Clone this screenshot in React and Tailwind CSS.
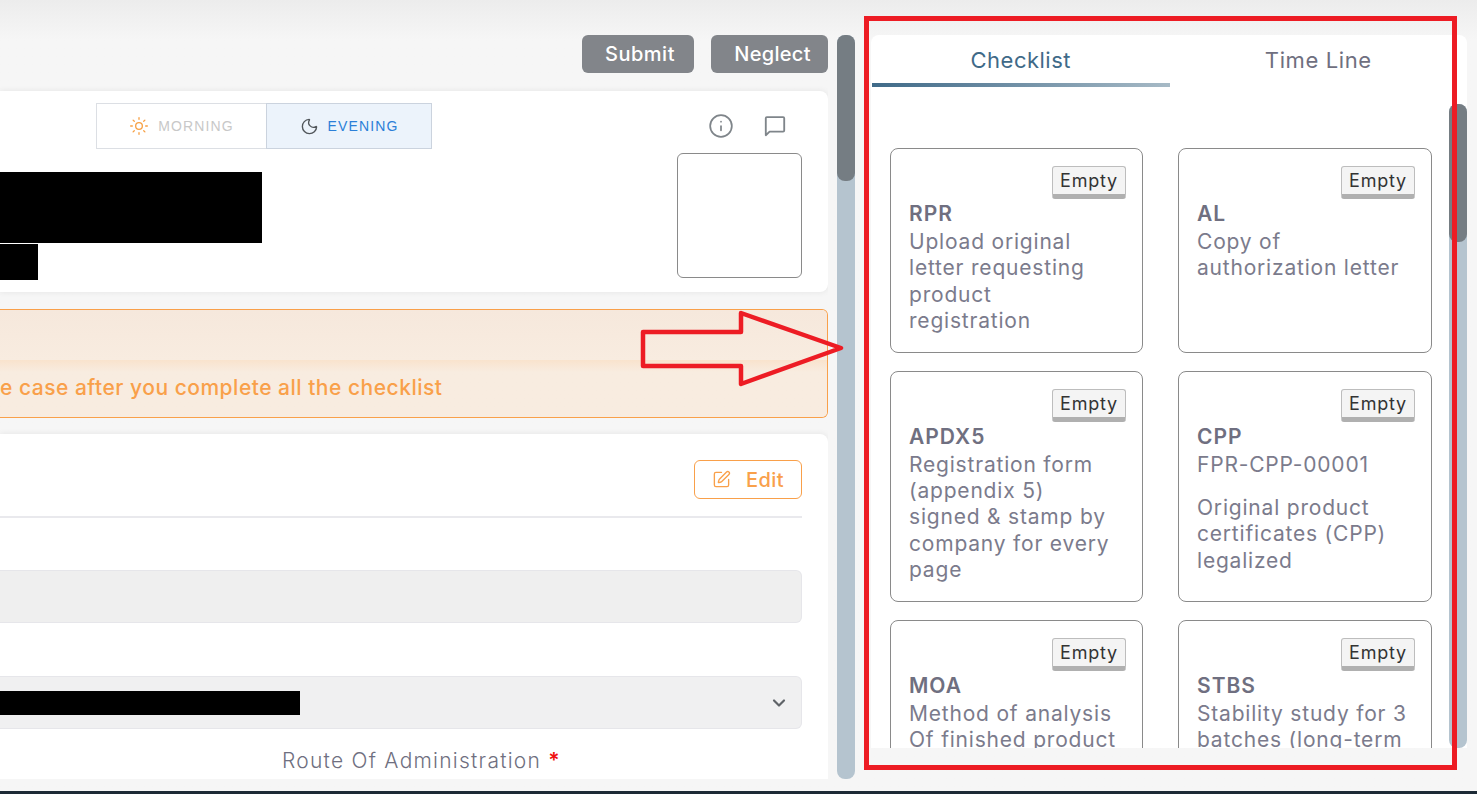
import { ChevronDown, Info, Moon, SquarePen, Sun } from "lucide-react";

const FONT = "font-['Inter','Noto_Sans',sans-serif]";

const checklist = [
  { code: "RPR", lines: ["Upload original", "letter requesting", "product", "registration"] },
  { code: "AL", lines: ["Copy of", "authorization letter"] },
  { code: "APDX5", lines: ["Registration form", "(appendix 5)", "signed & stamp by", "company for every", "page"] },
  { code: "CPP", lines: ["FPR-CPP-00001", "", "Original product", "certificates (CPP)", "legalized"] },
  { code: "MOA", lines: ["Method of analysis", "Of finished product"] },
  { code: "STBS", lines: ["Stability study for 3", "batches (long-term"] },
];

function ChatIcon() {
  return (
    <svg width="26" height="26" viewBox="0 0 24 24" fill="none" stroke="#7f858a" strokeWidth="1.7" strokeLinejoin="round">
      <path d="M3.5 4.8a1 1 0 0 1 1-1h15a1 1 0 0 1 1 1v11.4a1 1 0 0 1-1 1H7l-3.5 3.3z" />
    </svg>
  );
}

function ChecklistCard({ item }) {
  return (
    <div className="rounded-lg border border-[#8a8a8a] pl-[18px] pr-4 pt-[17px] pb-[18px]">
      <div className="flex justify-end">
        <span className="flex h-[33px] w-[74px] items-center justify-center rounded-[3px] border border-[#bdbdbd] border-b-[5px] border-b-[#b0b0b0] bg-[#f4f4f4] text-[18px] tracking-[0.8px] text-[#333]">
          Empty
        </span>
      </div>
      <div className="mt-[2px] text-[21px] font-semibold leading-[26px] tracking-[1px] text-[#6f6f80]">{item.code}</div>
      <div className="mt-[2px]">
        {item.lines.map((line, i) =>
          line ? (
            <div key={i} className="whitespace-nowrap text-[21px] leading-[26.3px] tracking-[0.8px] text-[#7b7b8c]">
              {line}
            </div>
          ) : (
            <div key={i} className="h-[17px]" />
          )
        )}
      </div>
    </div>
  );
}

function Scrollbar({ thumb, className }) {
  return (
    <div className={`w-[18px] shrink-0 rounded-b-lg bg-[#b5c4cf] ${className}`}>
      <div className={`rounded-lg bg-[#757d83] ${thumb}`} />
    </div>
  );
}

export default function App() {
  return (
    <div className={`relative flex h-[794px] flex-col overflow-hidden bg-[#f5f5f5] ${FONT}`}>
      <div className="flex min-h-0 flex-1 bg-gradient-to-b from-[#ececec] to-[#f6f6f6] to-[40px] pt-[35px]">
        {/* main form */}
        <div className="flex h-[744px] w-[828px] shrink-0 flex-col overflow-hidden">
          <div className="flex justify-end gap-[17px]">
            <button className="h-[38px] w-[112px] rounded-md bg-[#82858a] pl-1 text-[20px] font-medium tracking-[0.5px] text-white">Submit</button>
            <button className="h-[38px] w-[117px] rounded-md bg-[#82858a] pl-1.5 text-[20px] font-medium tracking-[0.3px] text-white">Neglect</button>
          </div>

          <div className="mt-[18px] flex h-[201px] shrink-0 justify-between rounded-r-lg bg-white pr-[26px] pt-3 shadow-[0_0_6px_rgba(0,0,0,0.08)]">
            <div>
              <div className="ml-[96px] flex h-[46px] w-[336px] font-['Liberation_Sans',sans-serif] text-[14px] tracking-[0.08em]">
                <div className="flex w-[170px] items-center justify-center gap-[9px] border border-r-0 border-[#dcdfe4] text-[#c8c8c8]">
                  <Sun size={20} strokeWidth={1.6} className="text-[#f7a044]" />
                  MORNING
                </div>
                <div className="flex w-[166px] items-center justify-center gap-[9px] border border-[#cbd3de] bg-[#ecf3fb] text-[#2b7fd8]">
                  <Moon size={19} strokeWidth={1.7} className="text-[#50555a]" />
                  EVENING
                </div>
              </div>
              <div className="mt-[23px] h-[71px] w-[262px] bg-black" />
              <div className="mt-px h-[36px] w-[38px] bg-black" />
            </div>
            <div className="flex flex-col items-end">
              <div className="flex h-[46px] items-center gap-[28px] pr-[14px]">
                <Info size={26} strokeWidth={1.6} className="text-[#7f858a]" />
                <ChatIcon />
              </div>
              <div className="mt-1 h-[125px] w-[125px] rounded-md border border-[#8a8a8a]" />
            </div>
          </div>

          <div className="relative z-10 mt-[17px] h-[109px] shrink-0 overflow-hidden rounded-r-md bg-[#f9a04a] py-px pr-px">
            <div className="h-full overflow-hidden rounded-r-[5px] bg-[#f8ece0]">
              <div className="h-[50px] bg-gradient-to-b from-[#f6e8dc] to-[#f8ece0]" />
              <div className="flex h-[57px] items-center bg-gradient-to-b from-[#f9e3cd] to-[#f8ece0] to-[12px] pb-[2px] text-[21px] font-medium tracking-[0.5px] text-[#f9a04a]">
                <span className="whitespace-nowrap">e case after you complete all the checklist</span>
              </div>
            </div>
          </div>

          <div className="mt-[16px] min-h-0 flex-1 rounded-tr-lg bg-white pr-[26px] pt-[26px] shadow-[0_0_6px_rgba(0,0,0,0.08)]">
            <div className="flex justify-end border-b-2 border-[#e9e9ed] pb-[17px]">
              <button className="flex h-[39px] w-[108px] items-center justify-center gap-[15px] rounded-md border border-[#f9a04a] text-[20px] font-medium tracking-[0.4px] text-[#f9a04a]">
                <SquarePen size={19} strokeWidth={1.7} />
                Edit
              </button>
            </div>
            <div className="mt-[52px] h-[53px] rounded-r-md border-y border-r border-[#e6e6ea] bg-[#efefef]" />
            <div className="mt-[53px] flex h-[53px] items-center justify-between rounded-r-md border-y border-r border-[#e6e6ea] bg-[#f0f0f1] pr-3">
              <div className="h-[24px] w-[300px] bg-black" />
              <ChevronDown size={20} strokeWidth={2.6} className="text-[#5f6368]" />
            </div>
            <div className="mt-[18px] pl-[282px] text-[21px] font-light leading-[28px] tracking-[1.25px] text-[#6f6f80]">
              Route Of Administration <span className="font-semibold text-[#f01010]">*</span>
            </div>
          </div>
        </div>

        <Scrollbar className="ml-[9px] h-[744px] rounded-t-lg" thumb="h-[146px]" />

        {/* checklist panel */}
        <div className="ml-[16px] flex h-[713px] w-[596px] shrink-0 flex-col overflow-hidden rounded-t-lg bg-white">
          <div className="flex h-[52px] shrink-0 pl-px">
            <div className="flex w-[298px] flex-col">
              <div className="flex h-12 items-center justify-center pt-[3px] text-[22px] tracking-[0.5px] text-[#3f6a88]">Checklist</div>
              <div className="h-1 bg-gradient-to-r from-[#3f6a88] to-[#a7bac6]" />
            </div>
            <div className="flex h-12 w-[298px] items-center justify-center pt-[3px] text-[22px] tracking-[0.6px] text-[#6f6f80]">Time Line</div>
          </div>
          <div className="flex min-h-0 flex-1">
            <div className="grid min-w-0 flex-1 auto-rows-min grid-cols-[253px_254px] gap-x-[35px] gap-y-[17.5px] overflow-hidden pl-[19px] pt-[61px]">
              {checklist.map((item) => (
                <ChecklistCard key={item.code} item={item} />
              ))}
            </div>
            <Scrollbar className="mt-[17px] rounded-t-lg" thumb="h-[138px]" />
          </div>
        </div>
      </div>
      <div className="h-[3px] shrink-0 bg-[#1d2b36]" />

      {/* red annotation drawn on top of the screenshot */}
      <div className="absolute z-20 left-[864px] top-[16px] h-[754px] w-[593px] border-[5px] border-[#ed1c24]" />
      <svg className="absolute z-20 left-[636px] top-[306px]" width="212" height="86" viewBox="0 0 212 86" fill="none" stroke="#ed1c24" strokeWidth="4.5" strokeLinejoin="round">
        <path d="M7 26H105V7L205 42L105 78V60H7Z" />
      </svg>
    </div>
  );
}
